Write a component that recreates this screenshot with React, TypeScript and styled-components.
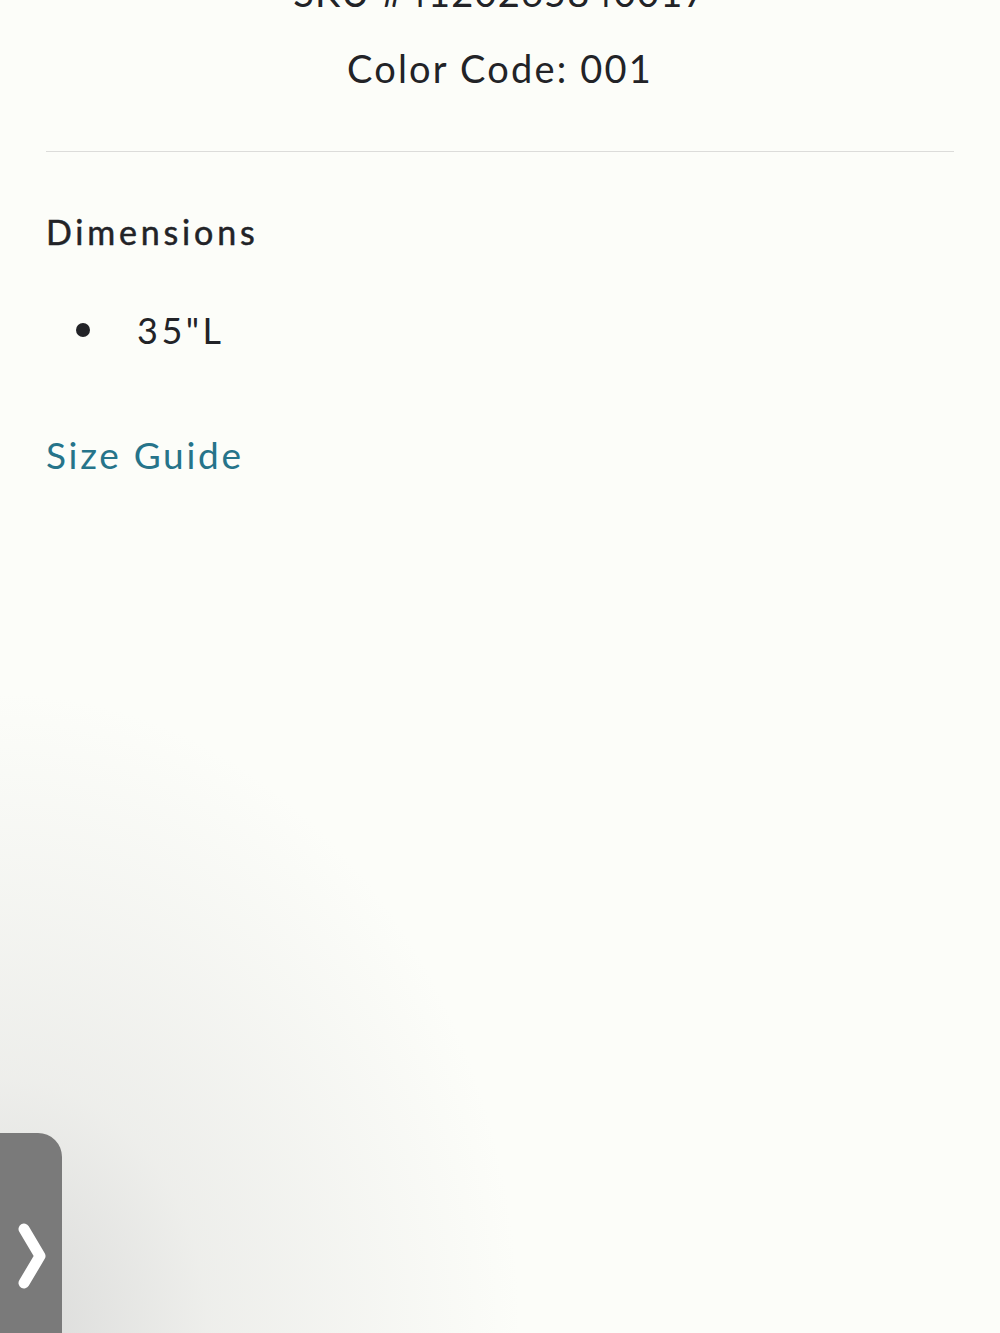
import styled, { createGlobalStyle } from "styled-components";

const GlobalStyle = createGlobalStyle`
  html, body {
    margin: 0;
    padding: 0;
    background: #fcfdf9;
  }
  body {
    font-family: Lato, "Open Sans", sans-serif;
    color: #222327;
  }
`;

const Page = styled.div`
  position: relative;
  height: 1333px;
  overflow: hidden;
  background:
    radial-gradient(
      ellipse 520px 640px at 0% 100%,
      rgba(205, 205, 205, 0.75) 0%,
      rgba(220, 220, 218, 0.45) 40%,
      rgba(252, 253, 249, 0) 100%
    ),
    #fcfdf9;
`;

const Content = styled.div`
  padding: 0 46px;
`;

const MetaBlock = styled.div`
  display: flex;
  flex-direction: column;
  align-items: center;
  gap: 32px;
  margin-top: -30px;
  padding-bottom: 61px;
  border-bottom: 1px solid #dcdcda;
`;

const MetaLine = styled.div<{ $tight?: boolean }>`
  font-size: 38px;
  line-height: 44px;
  letter-spacing: ${({ $tight }) => ($tight ? "1.2px" : "2.2px")};
`;

const SectionTitle = styled.h3`
  margin: 58px 0 0;
  font-size: 34px;
  font-weight: 400;
  -webkit-text-stroke: 0.5px #222327;
  letter-spacing: 3.8px;
  line-height: 44px;
`;

const BulletList = styled.ul`
  list-style: none;
  margin: 54px 0 0;
  padding: 0 0 0 30px;
`;

const BulletItem = styled.li`
  display: flex;
  align-items: center;
  gap: 47px;
  font-size: 36px;
  line-height: 44px;
  letter-spacing: 3.5px;

  &::before {
    content: "";
    width: 14px;
    height: 14px;
    border-radius: 50%;
    background: #222327;
  }
`;

const GuideLink = styled.a`
  display: inline-block;
  margin-top: 81px;
  font-size: 37px;
  line-height: 44px;
  letter-spacing: 2.7px;
  color: #26748a;
  text-decoration: none;
`;

const SideTab = styled.button`
  position: absolute;
  left: 0;
  bottom: 0;
  width: 62px;
  height: 200px;
  border: none;
  padding: 0 0 40px 14px;
  display: flex;
  align-items: flex-end;
  background: #7a7a7a;
  border-top-right-radius: 24px;
  cursor: pointer;
`;

const Chevron = () => (
  <svg width="34" height="74" viewBox="0 0 34 74">
    <path
      d="M10 10 L26 37 L10 64"
      fill="none"
      stroke="#ffffff"
      strokeWidth="11"
      strokeLinecap="round"
      strokeLinejoin="round"
    />
  </svg>
);

export default function App() {
  return (
    <>
      <GlobalStyle />
      <Page>
        <Content>
          <MetaBlock>
            <MetaLine $tight>SKU #4120265840017</MetaLine>
            <MetaLine>Color Code: 001</MetaLine>
          </MetaBlock>
          <SectionTitle>Dimensions</SectionTitle>
          <BulletList>
            <BulletItem>35"L</BulletItem>
          </BulletList>
          <GuideLink href="#">Size Guide</GuideLink>
        </Content>
        <SideTab aria-label="Open">
          <Chevron />
        </SideTab>
      </Page>
    </>
  );
}
